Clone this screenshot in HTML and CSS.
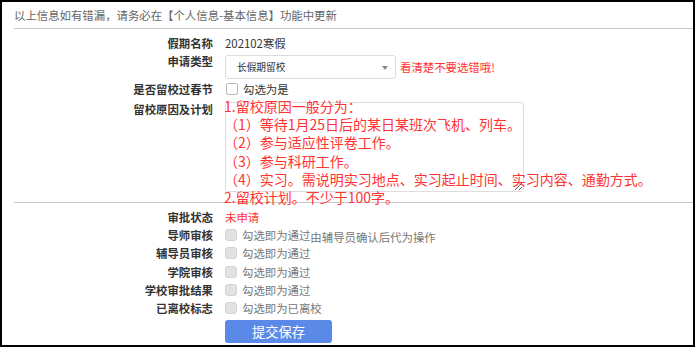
FILE: index.html
```html
<!DOCTYPE html>
<html lang="zh-CN">
<head>
    <meta charset="UTF-8">
    <title>假期留校申请</title>
    <link rel="stylesheet" href="styles.css">
</head>
<body>

<div class="page">
    <p class="notice">以上信息如有错漏，请务必在【个人信息-基本信息】功能中更新</p>

    <div class="form">
        <div class="row">
            <span class="lbl">假期名称</span>
            <span class="val">202102寒假</span>
        </div>
        <div class="row row-select">
            <span class="lbl">申请类型</span>
            <div class="val">
                <div class="select">长假期留校<span class="arrow"></span></div>
                <span class="warn">看清楚不要选错哦!</span>
            </div>
        </div>
        <div class="row">
            <span class="lbl">是否留校过春节</span>
            <span class="val"><span class="check"></span>勾选为是</span>
        </div>
        <div class="row row-reason">
            <span class="lbl">留校原因及计划</span>
            <div class="val">
                <div class="area-wrap">
                    <textarea class="area"></textarea>
                    <div class="hint">
                        1.留校原因一般分为：<br>
                        （1）等待1月25日后的某日某班次飞机、列车。<br>
                        （2）参与适应性评卷工作。<br>
                        （3）参与科研工作。<br>
                        （4）实习。需说明实习地点、实习起止时间、实习内容、通勤方式。<br>
                        2.留校计划。不少于100字。
                    </div>
                </div>
            </div>
        </div>
    </div>

    <div class="divider"></div>

    <div class="form form-audit">
        <div class="row">
            <span class="lbl">审批状态</span>
            <span class="val status">未申请</span>
        </div>
        <div class="row">
            <span class="lbl">导师审核</span>
            <span class="val muted"><span class="check disabled"></span>勾选即为通过<span class="note">由辅导员确认后代为操作</span></span>
        </div>
        <div class="row">
            <span class="lbl">辅导员审核</span>
            <span class="val muted"><span class="check disabled"></span>勾选即为通过</span>
        </div>
        <div class="row">
            <span class="lbl">学院审核</span>
            <span class="val muted"><span class="check disabled"></span>勾选即为通过</span>
        </div>
        <div class="row">
            <span class="lbl">学校审批结果</span>
            <span class="val muted"><span class="check disabled"></span>勾选即为通过</span>
        </div>
        <div class="row">
            <span class="lbl">已离校标志</span>
            <span class="val muted"><span class="check disabled"></span>勾选即为已离校</span>
        </div>
        <button class="submit-btn">提交保存</button>
    </div>
</div>

</body>
</html>
```

FILE: styles.css
```css
* {
    box-sizing: border-box;
    margin: 0;
    padding: 0;
}

body {
    font-family: "Noto Sans CJK SC", "Liberation Sans", sans-serif;
    font-size: 11.4px;
    color: #333;
    background: #fff;
}

.page {
    width: 695px;
    height: 347px;
    border: 2px solid #000;
    overflow: hidden;
}

.notice {
    margin-left: 12px;
    height: 27px;
    line-height: 27px;
    color: #666;
    border-bottom: 1px solid #c8c8c8;
}

.form {
    padding-top: 5px;
}

.row {
    display: flex;
    align-items: flex-start;
}

.lbl {
    flex: none;
    width: 211px;
    margin-right: 12px;
    text-align: right;
    font-weight: bold;
    line-height: 18px;
    color: #333;
}

.val {
    display: flex;
    align-items: center;
    line-height: 18px;
    height: 18px;
}

/* select row */
.row-select .val {
    height: auto;
    margin-top: 3px;
    margin-bottom: 1px;
}

.select {
    position: relative;
    width: 171px;
    height: 24px;
    line-height: 22px;
    padding-left: 11px;
    font-size: 9.7px;
    color: #333;
    border: 1px solid #ddd;
    border-radius: 3px;
    background: #fff;
}

.arrow {
    position: absolute;
    right: 7px;
    top: 10px;
    border-left: 3.5px solid transparent;
    border-right: 3.5px solid transparent;
    border-top: 4px solid #888;
}

.warn {
    margin-left: 4px;
    color: #f33;
}

/* checkboxes */
.check {
    display: inline-block;
    width: 12px;
    height: 12px;
    margin: 0 5px 0 1px;
    border: 1px solid #bbb;
    border-radius: 2px;
    background: #fff;
}

.check.disabled {
    margin-left: 0;
    width: 12px;
    border-color: #d4d4d4;
    border-radius: 3px;
    background: #e2e2e2;
}

.muted {
    color: #777;
}

.note {
    position: relative;
    top: 2px;
}

/* reason textarea */
.row-reason {
    margin-top: 2px;
}

.row-reason .val {
    height: auto;
    margin-top: 2px;
}

.area-wrap {
    position: relative;
}

.area {
    display: block;
    width: 299px;
    height: 90px;
    border: 1px solid #ddd;
    border-radius: 3px;
    background: #fff;
}

.hint {
    position: absolute;
    left: -1px;
    top: -5px;
    white-space: nowrap;
    font-size: 14px;
    line-height: 18.2px;
    color: #f33;
}

.divider {
    margin: 10px 0 0 12px;
    border-top: 1px solid #c8c8c8;
}

.form-audit .row {
    height: 18.2px;
}

.status {
    color: #f33;
}

.submit-btn {
    display: block;
    margin: 3px 0 0 223px;
    width: 107px;
    height: 23px;
    border: none;
    border-radius: 3px;
    background: #5b89e8;
    color: #fff;
    font-family: inherit;
    font-size: 13.3px;
    line-height: 23px;
}
```
